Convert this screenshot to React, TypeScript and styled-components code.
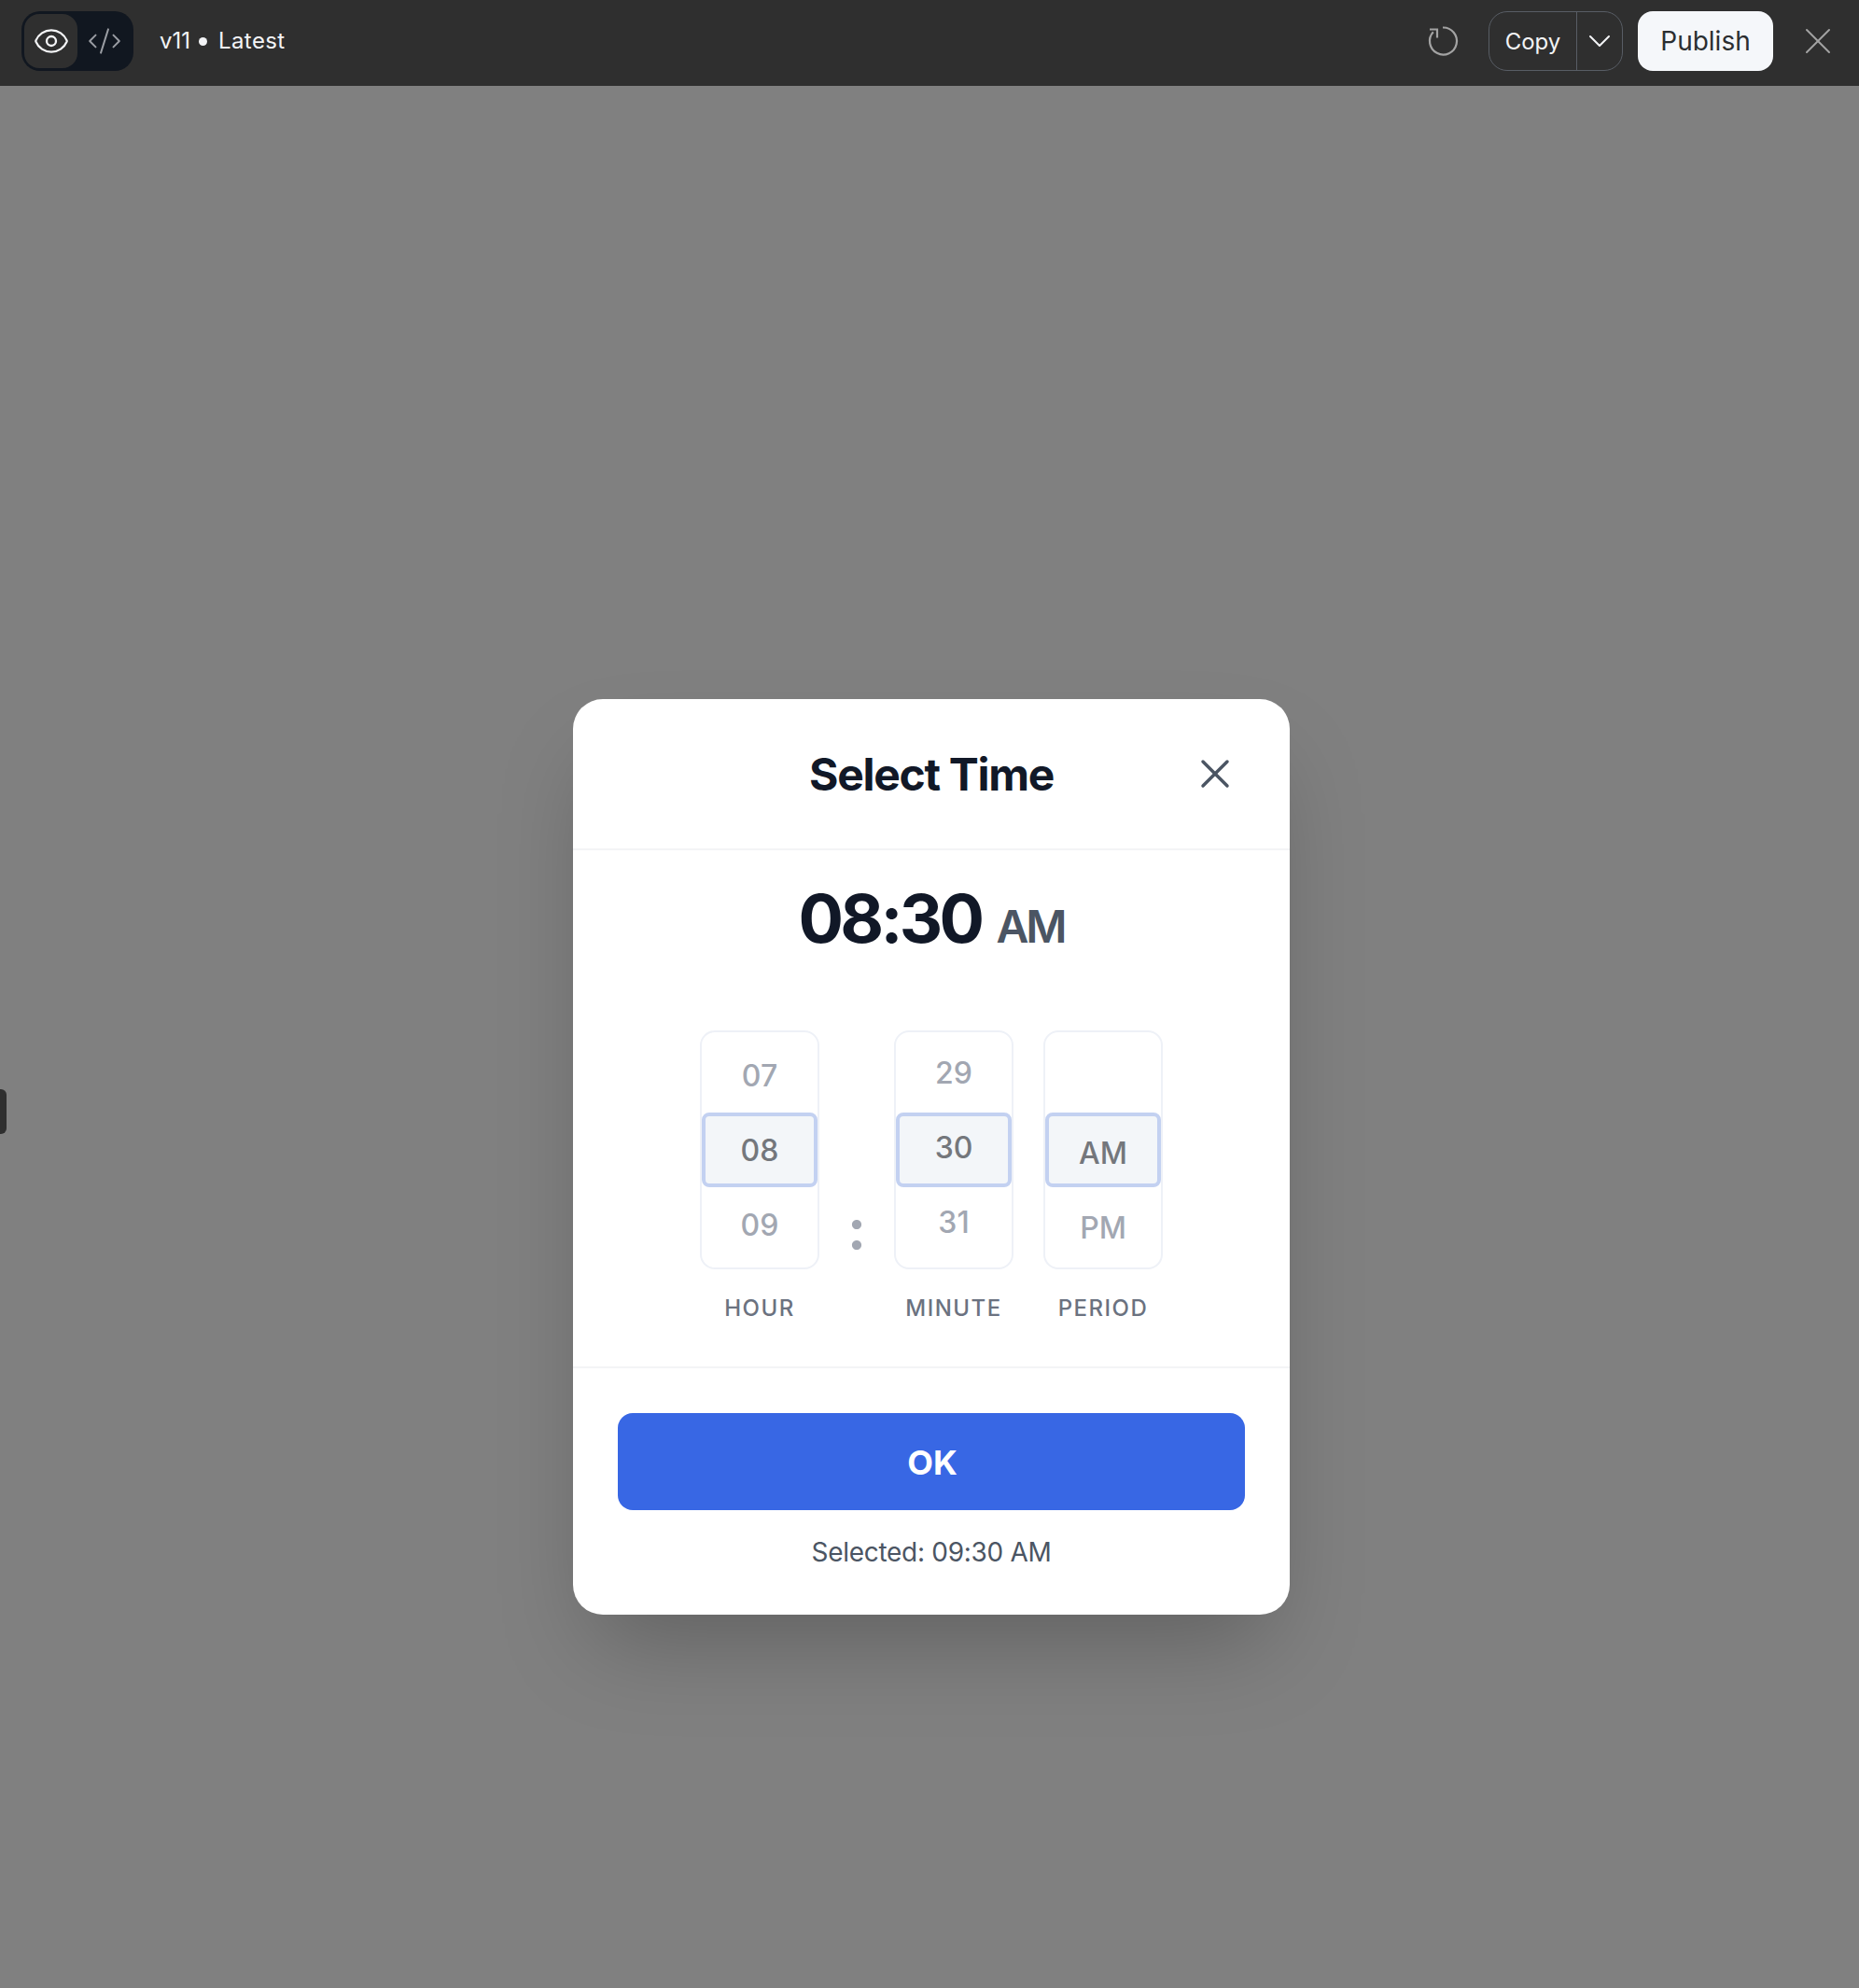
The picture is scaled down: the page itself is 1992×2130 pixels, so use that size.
import { Fragment } from 'react';
import styled, { createGlobalStyle } from 'styled-components';
import { ChevronDown, CodeXml, Eye, X } from 'lucide-react';

const GlobalStyle = createGlobalStyle`
  html, body {
    margin: 0;
    padding: 0;
    background: #808080;
  }
  * {
    box-sizing: border-box;
  }
`;

const Page = styled.div`
  position: relative;
  width: 1992px;
  height: 2130px;
  display: flex;
  flex-direction: column;
  font-family: Inter, "Liberation Sans", sans-serif;
  background: #808080;
  overflow: hidden;
`;

const TopBar = styled.header`
  height: 92px;
  flex-shrink: 0;
  display: flex;
  align-items: center;
  justify-content: space-between;
  padding: 0 20px 4px 23px;
  background: #2f2f2f;
`;

const BarSide = styled.div`
  display: flex;
  align-items: center;
`;

const ViewToggle = styled.div`
  width: 120px;
  height: 64px;
  padding: 3px;
  display: flex;
  align-items: center;
  border-radius: 20px;
  background: #111720;
`;

const ToggleButton = styled.div<{ $active?: boolean }>`
  width: 57px;
  height: 58px;
  display: flex;
  align-items: center;
  justify-content: center;
  border-radius: 16px;
  background: ${(p) => (p.$active ? '#2f2f2f' : 'transparent')};
  color: ${(p) => (p.$active ? '#f3f4f6' : '#9a9da3')};
`;

const Version = styled.div`
  margin-left: 28px;
  display: flex;
  align-items: center;
  font-size: 24px;
  line-height: 32px;
  color: #f3f4f6;
`;

const VersionDot = styled.span`
  width: 9px;
  height: 9px;
  margin: 0 12px 0 9px;
  border-radius: 50%;
  background: #f3f4f6;
`;

const VersionName = styled.span`
  letter-spacing: 0.4px;
`;

const IconButton = styled.div<{ $tint: string }>`
  display: flex;
  align-items: center;
  justify-content: center;
  color: ${(p) => p.$tint};
`;

const CopyGroup = styled.div`
  width: 144px;
  height: 64px;
  margin-left: 30px;
  display: flex;
  border: 1.5px solid #585d65;
  border-radius: 20px;
  color: #f3f4f6;
`;

const CopyLabel = styled.div`
  width: 94px;
  display: flex;
  align-items: center;
  justify-content: center;
  border-right: 1.5px solid #585d65;
  font-size: 24px;
`;

const CopyCaret = styled.div`
  flex: 1;
  display: flex;
  align-items: center;
  justify-content: center;
`;

const PublishButton = styled.div`
  width: 145px;
  height: 64px;
  margin: 0 24px 0 16px;
  display: flex;
  align-items: center;
  justify-content: center;
  border-radius: 16px;
  background: #f5f7fa;
  color: #2b2e31;
  font-size: 28px;
`;

const SideHandle = styled.div`
  position: absolute;
  left: 0;
  top: 1167px;
  width: 7px;
  height: 48px;
  border-radius: 0 6px 6px 0;
  background: #2f2f2f;
`;

const Stage = styled.main`
  flex: 1;
  display: flex;
  justify-content: center;
  align-items: flex-start;
  padding: 657px 0 0 4px;
`;

const Modal = styled.section`
  width: 768px;
  height: 981px;
  display: flex;
  flex-direction: column;
  border-radius: 32px;
  background: #ffffff;
  box-shadow: 0 50px 100px -24px rgba(0, 0, 0, 0.25);
`;

const ModalHeader = styled.div`
  position: relative;
  height: 162px;
  flex-shrink: 0;
  padding-top: 2px;
  display: flex;
  align-items: center;
  justify-content: center;
  border-bottom: 2px solid #f3f4f6;
`;

const Title = styled.h2`
  margin: 0;
  font-size: 48px;
  font-weight: 700;
  line-height: 56px;
  letter-spacing: -1.3px;
  color: #111827;
`;

const CloseButton = styled.div`
  position: absolute;
  right: 54px;
  top: 54px;
  display: flex;
  color: #4b5563;
`;

const ModalBody = styled.div`
  flex: 1;
  display: flex;
  flex-direction: column;
  align-items: center;
`;

const TimeDisplay = styled.div`
  margin-top: 31px;
  height: 84px;
  display: flex;
  align-items: baseline;
  gap: 16px;
  line-height: 84px;
`;

const TimeValue = styled.span`
  font-size: 72px;
  font-weight: 700;
  letter-spacing: -3.7px;
  color: #111827;
`;

const TimePeriod = styled.span`
  font-size: 48px;
  font-weight: 600;
  letter-spacing: -3px;
  color: #4b5563;
`;

const Wheels = styled.div`
  margin-top: 78px;
  display: flex;
  align-items: flex-start;
`;

const WheelGroup = styled.div<{ $gapBefore?: boolean }>`
  width: 128px;
  margin-left: ${(p) => (p.$gapBefore ? '32px' : '0')};
  display: flex;
  flex-direction: column;
  align-items: center;
  gap: 24px;
`;

const Wheel = styled.div`
  width: 128px;
  height: 256px;
  display: flex;
  flex-direction: column;
  justify-content: center;
  border: 2px solid #eef1f7;
  border-radius: 16px;
  background: #ffffff;
`;

const WheelItem = styled.div<{ $selected?: boolean; $nudge: number }>`
  height: 80px;
  display: flex;
  align-items: center;
  justify-content: center;
  padding-top: ${(p) => Math.max(p.$nudge, 0)}px;
  padding-bottom: ${(p) => Math.max(-p.$nudge, 0)}px;
  border: 4px solid ${(p) => (p.$selected ? '#c3d1f1' : 'transparent')};
  border-radius: 8px;
  background: ${(p) => (p.$selected ? '#f3f6f9' : 'transparent')};
  font-size: 32px;
  font-weight: 500;
  color: ${(p) => (p.$selected ? '#74777c' : '#a2a7b2')};
`;

const WheelLabel = styled.div`
  font-size: 24px;
  line-height: 36px;
  font-weight: 500;
  letter-spacing: 1.5px;
  color: #6b7280;
  white-space: nowrap;
`;

const Colon = styled.div`
  width: 80px;
  padding-top: 176px;
  text-align: center;
  font-size: 60px;
  line-height: 72px;
  font-weight: 700;
  color: #a2a7b2;
`;

const ModalFooter = styled.div`
  height: 266px;
  flex-shrink: 0;
  padding: 48px 48px 0;
  display: flex;
  flex-direction: column;
  align-items: stretch;
  gap: 25px;
  border-top: 2px solid #f3f4f6;
`;

const OkButton = styled.div`
  height: 104px;
  padding: 2px 0 0 2px;
  display: flex;
  align-items: center;
  justify-content: center;
  border-radius: 16px;
  background: #3867e4;
  color: #ffffff;
  font-size: 36px;
  font-weight: 700;
`;

const SelectedNote = styled.div`
  text-align: center;
  font-size: 28px;
  line-height: 40px;
  letter-spacing: -0.3px;
  color: #4b5563;
`;

const COLUMNS = [
  { label: 'HOUR', items: ['07', '08', '09'], nudge: 0 },
  { label: 'MINUTE', items: ['29', '30', '31'], nudge: -6 },
  { label: 'PERIOD', items: ['', 'AM', 'PM'], nudge: 6 },
];

function RefreshIcon() {
  return (
    <svg width="36" height="36" viewBox="0 0 36 36" fill="none" stroke="currentColor" strokeWidth="2.2">
      <path d="M17 3.5A14.5 14.5 0 1 1 6.8 8.2" />
      <path d="M3 5.5H11V14.5" />
    </svg>
  );
}

export default function App() {
  return (
    <Page>
      <GlobalStyle />
      <TopBar>
        <BarSide>
          <ViewToggle>
            <ToggleButton $active>
              <Eye size={40} strokeWidth={1.4} />
            </ToggleButton>
            <ToggleButton>
              <CodeXml size={38} strokeWidth={1.25} />
            </ToggleButton>
          </ViewToggle>
          <Version>
            <span>v11</span>
            <VersionDot />
            <VersionName>Latest</VersionName>
          </Version>
        </BarSide>
        <BarSide>
          <IconButton $tint="#a3a3a3">
            <RefreshIcon />
          </IconButton>
          <CopyGroup>
            <CopyLabel>Copy</CopyLabel>
            <CopyCaret>
              <ChevronDown size={40} strokeWidth={1.2} />
            </CopyCaret>
          </CopyGroup>
          <PublishButton>Publish</PublishButton>
          <IconButton $tint="#a3a3a3">
            <X size={48} strokeWidth={1} />
          </IconButton>
        </BarSide>
      </TopBar>
      <SideHandle />
      <Stage>
        <Modal>
          <ModalHeader>
            <Title>Select Time</Title>
            <CloseButton>
              <X size={52} strokeWidth={1.6} />
            </CloseButton>
          </ModalHeader>
          <ModalBody>
            <TimeDisplay>
              <TimeValue>08:30</TimeValue>
              <TimePeriod>AM</TimePeriod>
            </TimeDisplay>
            <Wheels>
              {COLUMNS.map((col, i) => (
                <Fragment key={col.label}>
                  {i === 1 && <Colon>:</Colon>}
                  <WheelGroup $gapBefore={i === 2}>
                    <Wheel>
                      {col.items.map((item, j) => (
                        <WheelItem key={j} $selected={j === 1} $nudge={col.nudge}>
                          {item}
                        </WheelItem>
                      ))}
                    </Wheel>
                    <WheelLabel>{col.label}</WheelLabel>
                  </WheelGroup>
                </Fragment>
              ))}
            </Wheels>
          </ModalBody>
          <ModalFooter>
            <OkButton>OK</OkButton>
            <SelectedNote>Selected: 09:30 AM</SelectedNote>
          </ModalFooter>
        </Modal>
      </Stage>
    </Page>
  );
}
